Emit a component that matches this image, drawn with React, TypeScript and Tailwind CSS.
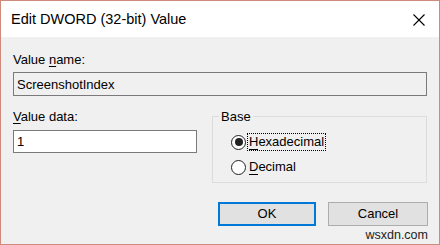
import { useState } from 'react';

const font = { fontFamily: '"Liberation Sans", Arial, sans-serif' };

function Radio({ checked, label, mnemonic, rest, focused, onClick }: {
  checked: boolean;
  label: string;
  mnemonic: string;
  rest: string;
  focused?: boolean;
  onClick: () => void;
}) {
  return (
    <button type="button" onClick={onClick} className="flex items-center h-[18px] text-left" aria-label={label}>
      <span className="w-[15px] h-[15px] rounded-full border border-[#222] bg-white flex items-center justify-center shrink-0">
        {checked && <span className="w-[8px] h-[8px] rounded-full bg-[#222]" />}
      </span>
      <span
        className={
          focused
            ? 'ml-[2px] px-[1px] leading-[16px] outline outline-1 outline-dotted outline-black outline-offset-0'
            : 'ml-[3px] leading-[16px]'
        }
      >
        <u className="no-underline border-b border-black leading-none">{mnemonic}</u>
        {rest}
      </span>
    </button>
  );
}

export default function App() {
  const [hex, setHex] = useState(true);
  const [data, setData] = useState('1');

  return (
    <div
      className="w-[440px] h-[245px] border border-[#d08a7b] flex flex-col text-black text-[13px]"
      style={font}
    >
      <div className="h-[36px] bg-white flex items-center pl-[10px] pr-[14px] shrink-0">
        <div className="text-[14.5px] pt-[2px] flex-1">Edit DWORD (32-bit) Value</div>
        <svg width="12" height="12" viewBox="0 0 12 12" className="mt-[1px]">
          <path d="M0.5 0.5 L11.5 11.5 M11.5 0.5 L0.5 11.5" stroke="#000" strokeWidth="1.1" fill="none" />
        </svg>
      </div>

      <div className="flex-1 bg-[#f0f0f0] px-[12px] pt-[15px] flex flex-col">
        <div className="leading-[15px]">
          Value <u className="underline-offset-2">n</u>ame:
        </div>
        <input
          readOnly
          value="ScreenshotIndex"
          className="mt-[5px] h-[24px] border border-[#7a7a7a] bg-[#f0f0f0] px-[3px] outline-none text-[13px]"
        />

        <div className="mt-[13px] flex">
          <div className="w-[184px] flex flex-col">
            <div className="leading-[15px]">
              <u className="underline-offset-2">V</u>alue data:
            </div>
            <input
              value={data}
              onChange={(e) => setData(e.target.value)}
              className="mt-[6px] h-[23px] border border-[#7a7a7a] bg-white px-[3px] outline-none text-[13px]"
            />
          </div>

          <fieldset className="ml-auto w-[215px] h-[74px] border border-[#dcdcdc] pl-[6px] pr-[6px]">
            <legend className="px-[2px] leading-[15px]">Base</legend>
            <div className="flex flex-col gap-[7px] pl-[12px] pt-[9px]">
              <Radio
                checked={hex}
                label="Hexadecimal"
                mnemonic="H"
                rest="exadecimal"
                focused
                onClick={() => setHex(true)}
              />
              <Radio
                checked={!hex}
                label="Decimal"
                mnemonic="D"
                rest="ecimal"
                onClick={() => setHex(false)}
              />
            </div>
          </fieldset>
        </div>

        <div className="mt-[19px] flex justify-end gap-[12px] mr-[-1px]">
          <button type="button" className="w-[98px] h-[24px] bg-[#e1e1e1] border-2 border-[#0078d7]">
            OK
          </button>
          <button type="button" className="w-[100px] h-[24px] bg-[#e1e1e1] border border-[#adadad]">
            Cancel
          </button>
        </div>

        <div className="text-right text-[12.5px] leading-[15px] mt-[2px] mr-[-1px] text-[#222]">wsxdn.com</div>
      </div>
    </div>
  );
}
